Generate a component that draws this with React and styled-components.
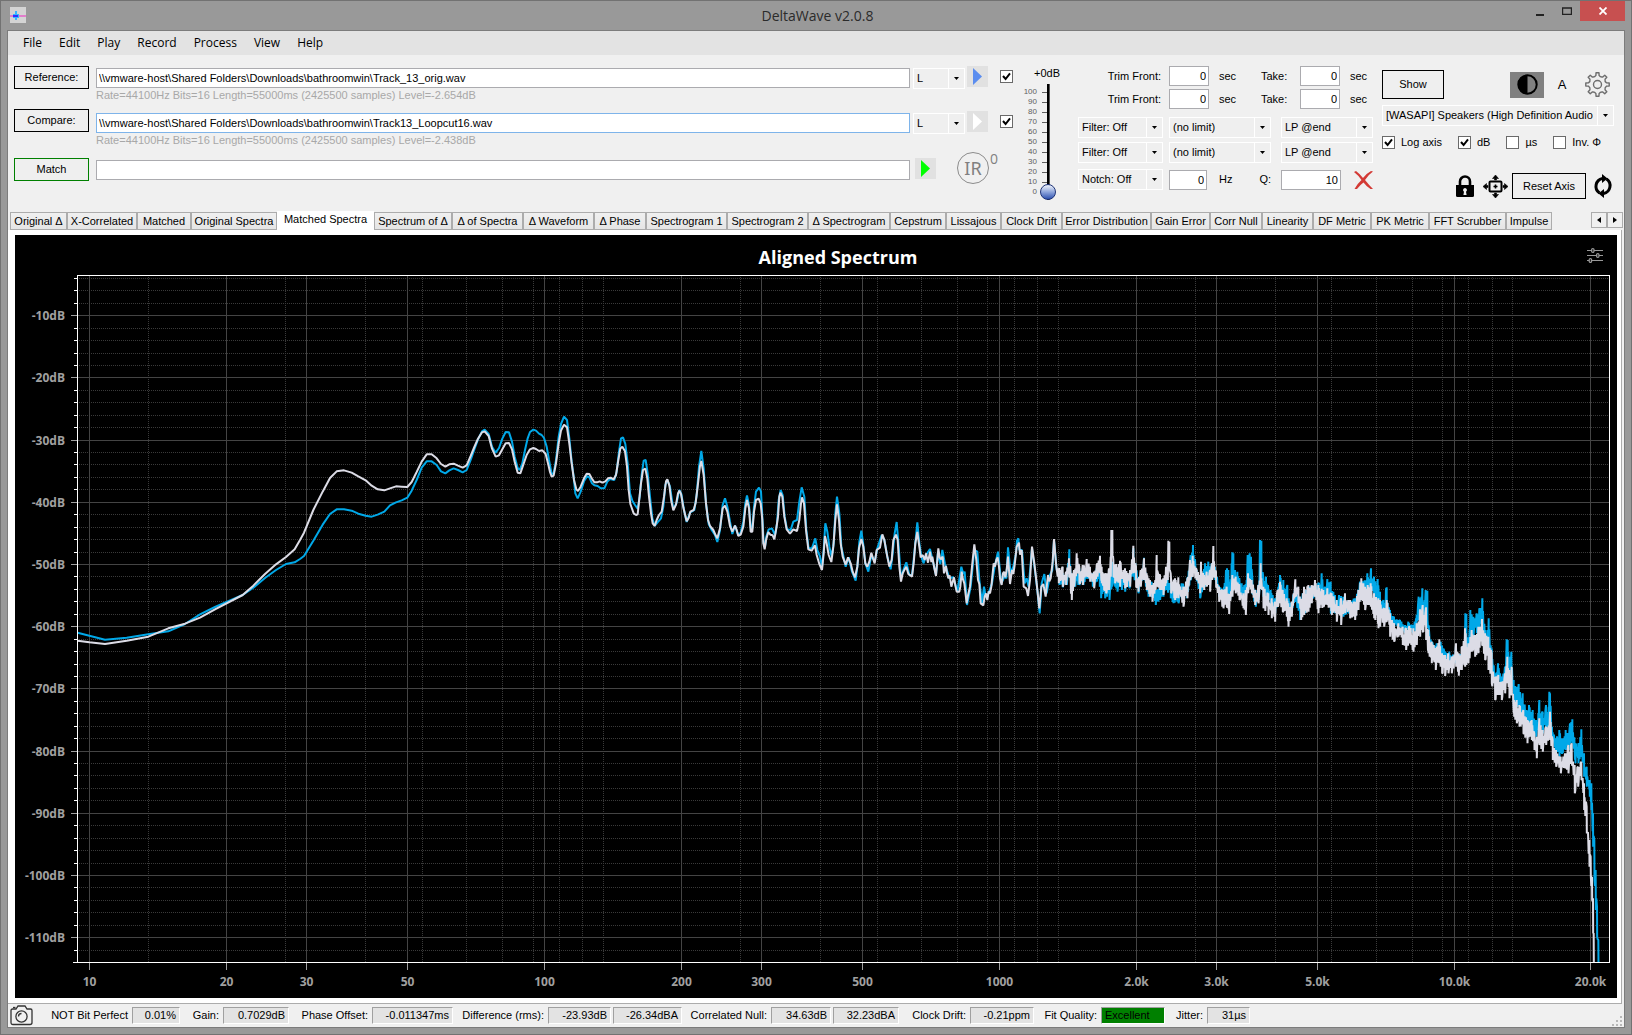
import { useLayoutEffect, useRef, useState } from 'react';
import styled, { createGlobalStyle } from 'styled-components';

const UI_FONT = '"Liberation Sans", Arial, sans-serif';
const SEGOE = '"Open Sans", "Noto Sans", sans-serif';

const GlobalStyle = createGlobalStyle`
  *, *::before, *::after { box-sizing: border-box; }
  html, body, #root { height: 100%; margin: 0; }
  body { background: #999; }
  button, input, select, output, label {
    font: 11px/13px ${UI_FONT};
    color: #000;
    margin: 0;
    padding: 0;
    border-radius: 0;
  }
`;

// --- WINDOW ---
const Window = styled.div`
  display: flex;
  flex-direction: column;
  height: 100%;
  border: 1px solid #727272;
  background: #999;
  font: 11px/13px ${UI_FONT};
  color: #000;
`;

const TitleBar = styled.header`
  display: grid;
  grid-template-columns: 1fr auto 1fr;
  height: 29px;
  flex: none;
  padding: 0 6px 0 9px;
`;

const AppIcon = styled.svg`
  width: 16px;
  height: 16px;
  margin-top: 6px;
`;

const WindowTitle = styled.h1`
  margin: 0;
  font: 14px/29px ${SEGOE};
  color: #2b2b2b;
`;

const WindowButtons = styled.div`
  display: flex;
  justify-content: flex-end;
  align-items: flex-start;
`;

const WindowButton = styled.button`
  display: flex;
  align-items: center;
  justify-content: center;
  width: ${({ $close }) => ($close ? 45 : 27)}px;
  height: 20px;
  border: 0;
  background: ${({ $close }) => ($close ? '#c75050' : 'transparent')};
`;

const Client = styled.div`
  flex: 1;
  min-height: 0;
  display: flex;
  flex-direction: column;
  margin: 0 6px 6px;
  border: 1px solid #7c7c7c;
  background: #f0f0f0;
`;

const MenuBar = styled.nav`
  display: flex;
  height: 24px;
  flex: none;
  padding-left: 7px;
  background: #e3e3e3;
`;

const MenuButton = styled.button`
  border: 0;
  background: none;
  padding: 0 9px 0 8px;
  font: 12px/24px ${SEGOE};
`;

// --- TOOLBAR ---
const Toolbar = styled.section`
  display: flex;
  height: 156px;
  flex: none;
  padding: 11px 10px 0 6px;
`;

const Button = styled.button`
  width: ${({ $w }) => $w}px;
  height: ${({ $h = 23 }) => $h}px;
  border: 1px solid ${({ $edge = '#000' }) => $edge};
  background: #efefef;
`;

const ButtonColumn = styled.div`
  display: grid;
  grid-template-rows: 43px 49px 23px;
  align-content: start;
  margin-right: 7px;
`;

const FieldColumn = styled.div`
  flex: 1;
  min-width: 200px;
  display: grid;
  grid-template-rows: 45px 47px 20px;
  align-content: start;
  padding-top: 2px;
`;

const FileField = styled.div`
  display: flex;
  flex-direction: column;
  gap: 1px;
`;

const TextBox = styled.input`
  width: ${({ $w }) => ($w ? `${$w}px` : '100%')};
  height: 20px;
  flex: none;
  padding: 0 2px;
  border: 1px solid ${({ $focus }) => ($focus ? '#7eb4ea' : '#ababaf')};
  background: #fff;
  text-align: ${({ $right }) => ($right ? 'right' : 'left')};
  outline: none;
`;

const FileInfo = styled.span`
  color: #a8a8a8;
`;

const DeckColumn = styled.div`
  display: grid;
  grid-template-rows: 45px 45px 36px;
  align-content: start;
  margin-left: 3px;
  width: 101px;
`;

const DeckRow = styled.div`
  display: flex;
  align-items: flex-start;
  gap: 2px;
`;

const SelectBox = styled.div`
  position: relative;
  display: flex;
  width: ${({ $w }) => ($w ? `${$w}px` : '100%')};
  height: 21px;
  flex: none;
  margin-top: ${({ $drop = 0 }) => $drop}px;
  border: 1px solid #fff;
  background: #efefef;
`;

const NativeSelect = styled.select`
  appearance: none;
  flex: 1;
  min-width: 0;
  height: 19px;
  padding: 0 17px 0 3px;
  border: 0;
  outline: none;
  white-space: nowrap;
  overflow: hidden;
  background: linear-gradient(#fff, #fff) right 15px top / 1px 100% no-repeat;
`;

const SelectArrow = styled.svg`
  position: absolute;
  right: 5px;
  top: 8px;
  width: 5px;
  height: 3px;
  pointer-events: none;
`;

const PlayButton = styled.button`
  display: flex;
  align-items: center;
  justify-content: center;
  width: 21px;
  height: 21px;
  flex: none;
  border: 0;
  background: #e1e1e1;
`;

const Check = styled.input`
  appearance: none;
  width: 13px;
  height: 13px;
  flex: none;
  border: 1px solid #6a6a6a;
  background: #fff;

  &:checked {
    background: #fff url("data:image/svg+xml,%3Csvg xmlns='http://www.w3.org/2000/svg' viewBox='0 0 11 11'%3E%3Cpath d='M2 5l2.6 3L9 2.4' fill='none' stroke='%23000' stroke-width='2'/%3E%3C/svg%3E") center / 11px 11px no-repeat;
  }
`;

const DeckCheck = styled(Check)`
  margin: 4px 0 0 10px;
`;

const MatchRow = styled.div`
  display: flex;
  align-items: center;
  padding: 0 0 12px 2px;
`;

const ImpulseButton = styled.button`
  display: flex;
  align-items: flex-start;
  gap: 1px;
  margin-left: 21px;
  border: 0;
  background: none;
  font: 14px/14px ${SEGOE};
  color: #808080;
`;

const ImpulseBadge = styled.span`
  display: flex;
  align-items: center;
  justify-content: center;
  width: 32px;
  height: 32px;
  border: 1px solid #8c8c8c;
  border-radius: 50%;
  font: 18px/28px "Noto Sans", sans-serif;
`;

const VolumeColumn = styled.div`
  display: grid;
  grid-template-columns: 25px 16px;
  grid-template-rows: 18px 116px;
  align-content: start;
  margin: 0 22px 0 1px;
`;

const VolumeLabel = styled.label`
  grid-column: 1 / -1;
  text-align: right;
  line-height: 15px;
  margin-right: -4px;
  white-space: nowrap;
`;

const Scale = styled.ul`
  margin: 3px 0 0;
  padding: 0;
  list-style: none;
  font: 8px/10px ${UI_FONT};
  color: #606060;
`;

const ScaleMark = styled.li`
  display: flex;
  align-items: center;
  justify-content: flex-end;
  gap: 5px;
  height: 10px;
  margin-right: -8px;

  &::after {
    content: '';
    width: 6px;
    height: 1px;
    background: #606060;
  }
`;

const VolumeSlider = styled.input`
  appearance: none;
  writing-mode: vertical-lr;
  direction: rtl;
  width: 16px;
  height: 116px;
  background: linear-gradient(90deg, #000 2px, #555 2px) center / 3px 100% no-repeat;

  &::-webkit-slider-thumb {
    appearance: none;
    width: 16px;
    height: 16px;
    border: 1px solid #1f3478;
    border-radius: 50%;
    background: linear-gradient(#dfe6f5 10%, #8ea5dc 50%, #2f52b0);
  }
`;

const FilterPanel = styled.div`
  width: 297px;
  flex: none;
  display: flex;
  flex-direction: column;
`;

const TrimRow = styled.div`
  display: grid;
  grid-template-columns: 81px 40px 32px 29px 40px 20px;
  column-gap: 10px;
  align-items: center;
  height: 20px;
  margin-bottom: 3px;
`;

const TrimLabel = styled.label`
  text-align: right;
  margin-right: -2px;
`;

const FilterRow = styled.div`
  display: grid;
  grid-template-columns: 85px 106px 92px;
  column-gap: 6px;
  align-items: center;
  margin-top: ${({ $gap = 4 }) => $gap}px;
`;

const NotchCell = styled.div`
  display: flex;
  align-items: center;
  gap: 12px;
`;

const QualityLabel = styled.label`
  margin: 0 4px 0 auto;
`;

const IconButton = styled.button`
  display: flex;
  align-items: center;
  justify-content: center;
  width: ${({ $w = 26 }) => $w}px;
  height: 26px;
  flex: none;
  border: 0;
  background: ${({ $bg = 'none' }) => $bg};
  font-size: ${({ $size = 11 }) => $size}px;
`;

const ClearButton = styled(IconButton)`
  height: 20px;
`;

const ViewPanel = styled.div`
  width: 232px;
  flex: none;
  margin-left: 7px;
  padding-top: 4px;
`;

const ViewRow = styled.div`
  display: flex;
  align-items: center;
  justify-content: space-between;
  margin-bottom: ${({ $gap = 0 }) => $gap}px;
`;

const IconGroup = styled.div`
  display: flex;
  align-items: center;
  gap: 5px;
`;

const CheckRow = styled.div`
  display: flex;
  gap: 16px;
  height: 13px;
  margin: 10px 0 24px;
`;

const CheckLabel = styled.label`
  display: flex;
  align-items: center;
  gap: 6px;
  white-space: nowrap;
`;

const AxisRow = styled.div`
  display: flex;
  align-items: center;
  justify-content: flex-end;
  margin-right: -6px;
`;

// --- TABS ---
const TabStrip = styled.div`
  display: flex;
  align-items: flex-end;
  height: 19px;
  flex: none;
  padding-left: 2px;
`;

const Tab = styled.button`
  width: ${({ $w }) => $w}px;
  height: ${({ $active }) => ($active ? 20 : 18)}px;
  flex: 0 1 auto;
  padding-bottom: ${({ $active }) => ($active ? 3 : 0)}px;
  margin-bottom: ${({ $active }) => ($active ? -1 : 0)}px;
  border: 1px solid ${({ $active }) => ($active ? '#fff' : '#acacac')};
  background: ${({ $active }) => ($active ? '#fff' : 'linear-gradient(#f0f0f0, #e5e5e5)')};
  white-space: nowrap;
  text-align: center;
`;

const TabScroll = styled.div`
  display: flex;
  align-self: flex-start;
  margin: 1px 1px 0 auto;
`;

const ScrollButton = styled.button`
  width: 16px;
  height: 16px;
  border: 1px solid #acacac;
  background: #f0f0f0;
  display: flex;
  align-items: center;
  justify-content: center;
`;

// --- CHART ---
const TabPage = styled.main`
  flex: 1;
  min-height: 0;
  display: flex;
  padding: 5px 4px 5px 7px;
  margin-right: 2px;
  border: solid #acacac;
  border-width: 0 1px 1px 0;
  background: #fff;
`;

const ChartPanel = styled.section`
  flex: 1;
  min-width: 0;
  display: flex;
  flex-direction: column;
  background: #000;
`;

const ChartHeader = styled.div`
  display: grid;
  grid-template-columns: 1fr auto 1fr;
  align-items: center;
  height: 40px;
  flex: none;
  padding: 4px 14px 0 58px;
`;

const ChartTitle = styled.h2`
  grid-column: 2;
  margin: 0;
  font: 700 18px/24px ${SEGOE};
  color: #fff;
`;

const ChartSettings = styled.button`
  justify-self: end;
  width: 16px;
  height: 16px;
  margin-bottom: 4px;
  border: 0;
  background: none;
`;

const ChartBody = styled.div`
  flex: 1;
  min-height: 0;

  svg { display: block; }
  text { font: 700 12px ${SEGOE}; fill: #a0a0a0; }
`;

// --- STATUS BAR ---
const StatusBar = styled.footer`
  display: flex;
  align-items: center;
  height: 23px;
  flex: none;
  padding: 0 1px 0 2px;
`;

const StatusGroup = styled.div`
  display: flex;
  align-items: center;
  gap: 2px;
  width: ${({ $w }) => $w}px;
  justify-content: flex-end;
`;

const StatusLabel = styled.label`
  margin-right: 2px;
  white-space: nowrap;
`;

const StatusValue = styled.output`
  width: ${({ $w }) => $w}px;
  height: 17px;
  flex: none;
  padding: 1px 3px 0;
  border: 1px solid;
  border-color: #a0a0a0 #fff #fff #a0a0a0;
  background: ${({ $good }) => ($good ? '#008000' : '#e3e3e3')};
  text-align: ${({ $good }) => ($good ? 'left' : 'right')};
`;

const SizeGrip = styled.svg`
  width: 12px;
  height: 12px;
  margin-left: auto;
  align-self: flex-end;
`;

// --- DATA ---
const menus = ['File', 'Edit', 'Play', 'Record', 'Process', 'View', 'Help'];

const tabs = [
  ['Original Δ', 57], ['X-Correlated', 70], ['Matched', 54], ['Original Spectra', 86],
  ['Matched Spectra', 97], ['Spectrum of Δ', 78], ['Δ of Spectra', 71], ['Δ Waveform', 71],
  ['Δ Phase', 52], ['Spectrogram 1', 81], ['Spectrogram 2', 81], ['Δ Spectrogram', 82],
  ['Cepstrum', 56], ['Lissajous', 55], ['Clock Drift', 61], ['Error Distribution', 89],
  ['Gain Error', 59], ['Corr Null', 52], ['Linearity', 51], ['DF Metric', 58],
  ['PK Metric', 58], ['FFT Scrubber', 77], ['Impulse', 46],
];

const statusItems = [
  { label: 'NOT Bit Perfect', width: 147, values: [['0.01%', 48]] },
  { label: 'Gain:', width: 109, values: [['0.7029dB', 66]] },
  { label: 'Phase Offset:', width: 164, values: [['-0.011347ms', 81]] },
  { label: 'Difference (rms):', width: 229, values: [['-23.93dB', 63], ['-26.34dBA', 69]] },
  { label: 'Correlated Null:', width: 217, values: [['34.63dB', 60], ['32.23dBA', 66]] },
  { label: 'Clock Drift:', width: 135, values: [['-0.21ppm', 64]] },
  { label: 'Fit Quality:', width: 131, values: [['Excellent', 64]], good: true },
  { label: 'Jitter:', width: 85, values: [['31µs', 43]] },
];

// Traces are stored on a 4599 x 2064 grid that covers the plot area.
const GRID_W = 4599;
const GRID_H = 2064;

// [x offset, y offset, "x,y x,y ..."]
const matchedLines = [
  [0, 0, '2,1097 37,1102 84,1107 149,1097 214,1085 274,1060 324,1046 369,1028 414,1003 497,960 529,932 564,897 597,868 627,846 653,823'],
  [669, 315, '0,480 12,458 40,390 68,335 90,294 110,274 132,271 155,278 175,289 197,301 215,317 233,328 253,331 270,325 288,319 305,320 322,321 335,306 350,276 365,245 380,223 395,223 410,235 423,252 436,260 448,253 461,251 474,257 488,263 500,256 512,228 523,201 534,176 546,157 554,154 566,168 576,206 587,230 597,226 607,208 617,190 627,189 636,208 644,245 653,278 661,280 670,254 680,225 690,208 700,204 708,207 717,213 727,211 737,222 744,250 750,276 755,290 761,287 768,250 776,190 783,152 792,134 801,142 808,190 815,250 822,300 829,328 834,333 842,320 852,295 860,281 868,282 876,296 883,307 891,307 899,304 907,308 916,304 924,295 932,293 941,298 948,285 955,240 961,206 967,200 975,214 981,260 986,330 991,372 1001,400 1008,405 1013,403 1017,365 1023,310 1029,270 1036,266 1042,296 1047,350 1053,400 1058,430 1064,438 1070,420 1077,405 1085,395 1092,350 1098,304 1102,298 1108,316 1114,364 1120,391 1128,374 1134,340 1138,332 1143,342 1150,382 1160,424 1166,414 1171,395 1181,390 1187,368 1193,320 1200,258 1204,243 1211,285 1218,370 1224,420 1230,438 1240,450 1247,466 1252,475'],
  [1869, 495, '60,265 68,205 75,197 82,215 90,258 97,275 105,257 110,270 115,288 122,284 130,260 136,205 141,180 147,205 152,275 157,275 162,215 168,180 176,176 182,190 187,240 190,310 194,328 198,300 205,276 211,284 218,286 223,298 229,265 234,230 238,170 241,158 247,170 253,230 260,268 270,281 280,268 291,273 298,240 303,190 306,172 312,190 318,270 325,328 335,332 345,316 350,345 358,372 366,390 371,340 375,288 380,310 386,345 394,366 400,320 406,240 411,193 417,240 422,310 428,350 437,374 444,352 452,370 458,395 465,412 472,380 477,325 484,297 490,320 496,370 502,380 508,365 514,338 519,355 524,370 530,330 540,323 547,283 553,300 560,340 568,380 575,360 580,300 588,284 593,300 598,380 603,425 608,400 613,390 619,380 625,402 636,410 641,370 646,310 652,276 658,320 662,352 668,345 674,360 678,340 684,368 690,335 694,366 697,350 703,385 708,408 715,325 719,352 722,358 728,350 732,400 738,378 741,400 745,415 749,406 754,440 762,412 766,436 770,455 778,455 781,440 785,395 789,418 793,430 800,490 804,466 810,440 817,370 823,313 829,360 834,420 838,432 842,490 850,496 854,470 858,460 862,480 866,455 870,460 874,440 881,370 885,380 889,360 893,352 897,380 900,415 905,435 909,400 912,395 916,412 920,390 924,350 930,432 936,390 940,402 944,375 950,320 957,308 960,344 965,330 971,440 979,445 984,468 990,420 996,320 1003,370 1010,430 1018,505 1024,440 1030,432 1037,470 1044,405 1048,424 1052,415 1058,365 1062,297 1068,370 1073,410'],
];

const compareLines = [
  [0, 0, '2,1073 37,1082 84,1094 149,1088 214,1078 274,1069 324,1047 369,1018 414,996 497,960 529,938 564,909 597,885 627,867 653,862'],
  [669, 315, '0,537 12,528 40,482 68,434 90,402 110,388 132,388 155,392 175,401 197,407 215,410 233,404 253,395 270,376 288,367 305,361 322,353 335,332 350,300 365,263 380,244 395,244 410,255 423,274 436,280 448,271 461,265 474,270 488,277 500,270 512,240 523,208 534,178 546,154 554,149 566,162 576,200 587,218 597,204 607,176 617,156 627,157 636,185 644,230 653,264 659,270 667,250 675,210 683,175 690,156 700,149 708,152 717,161 725,165 732,174 740,200 747,240 755,282 761,280 768,240 776,170 783,132 792,110 801,120 808,175 815,245 821,290 826,340 833,355 842,335 852,304 862,288 868,292 876,310 883,316 893,318 902,325 913,325 922,305 930,297 943,300 950,275 957,215 963,175 969,172 976,192 983,250 990,340 997,362 1005,375 1013,386 1019,350 1025,285 1031,242 1037,240 1043,280 1050,350 1057,415 1064,438 1072,428 1083,415 1090,380 1096,315 1102,300 1110,320 1120,388 1130,368 1138,330 1144,342 1152,390 1160,426 1170,398 1183,390 1190,345 1197,260 1204,213 1211,265 1218,370 1226,432 1235,450 1245,465 1252,486'],
  [1869, 495, '60,270 68,195 75,175 82,200 90,245 97,282 105,257 115,287 122,278 130,245 136,190 141,166 147,195 152,262 157,265 162,200 168,155 177,143 183,155 188,250 191,310 195,322 199,290 206,268 216,265 225,285 231,250 236,180 242,150 248,165 254,230 261,268 272,270 280,245 291,240 298,185 305,142 313,170 319,270 326,326 336,324 346,295 352,330 360,350 366,382 371,330 376,250 382,275 388,320 395,350 401,310 406,220 411,170 418,220 424,320 437,380 446,352 456,395 467,422 472,380 478,305 484,272 490,315 496,370 505,395 514,345 524,365 532,325 545,285 553,300 562,350 572,388 578,340 584,280 590,246 596,320 603,415 612,385 619,367 628,405 636,405 642,350 652,247 658,310 664,350 671,370 678,345 690,327 700,370 708,405 714,335 721,372 727,330 735,372 748,415 760,412 772,455 784,380 790,402 794,395 801,495 812,440 823,330 832,335 838,420 846,490 852,440 857,470 862,470 876,430 884,380 894,335 904,430 914,408 919,415 924,322 932,400 940,380 948,340 951,302 955,295 958,330 966,330 974,430 980,415 986,440 996,325 1006,400 1012,450 1019,520 1025,430 1033,402 1040,460 1050,405 1057,390 1062,300 1070,390'],
];

// [x offset, y offset, "x,top,bottom ..."] for the part where the bins get denser than the pixels
const matchedBands = [
  [3069, 645, '-124,235,280 -112,230,290 -102,245,285 -93,205,260 -85,250,330 -78,240,290 -70,190,250 -62,230,280 -52,225,285 -40,207,260 -30,230,275 -18,245,295 -8,220,260 0,197,250 5,230,280 12,250,300 18,250,310 27,235,300 32,200,260 34,120,200 37,120,200 40,210,260 45,225,280 60,212,290 75,235,295 90,240,290 100,167,250 108,230,290 115,265,305 122,240,290 132,205,270 140,250,300 150,270,320 157,285,335 166,270,300 170,195,290 174,250,290 180,255,300 190,265,315 198,230,280 203,220,270 205,152,230 208,155,240 213,265,310 225,265,330 235,262,325 250,290,350 262,265,325 270,210,270 278,197,260 290,240,270 300,255,310 303,215,290 312,255,300 320,245,290 330,240,305 336,220,270 340,168,250 348,245,290 357,290,335 370,300,355 380,290,350 387,320,372 397,255,320 407,260,310 418,285,330 430,310,355 437,300,375 444,250,310 455,270,310 465,300,345 475,285,340 482,220,290 490,290,355 505,310,375 515,325,385 525,335,395 533,300,350 540,275,340 548,300,365 560,325,380 565,340,410 575,335,380 586,268,320 595,290,340 603,330,390 612,290,375 625,285,365 635,285,340 645,270,320 655,285,370 670,300,350 682,295,345 695,310,375 710,330,395 723,325,405 735,310,370 750,330,385 765,335,390 775,300,360 784,265,330 795,290,360 803,285,345 812,280,350 822,310,385 835,325,415'],
  [3909, 735, '0,240,320 12,265,320 20,240,305 30,280,350 42,310,365 55,310,350 68,320,375 78,325,390 88,318,370 100,325,395 110,310,375 120,268,350 128,255,335 138,262,360 145,330,400 155,365,430 167,385,450 178,358,430 186,400,460 195,405,468 205,400,460 215,410,460 228,370,440 236,400,467 245,380,450 255,325,440 265,370,430 275,330,395 285,345,410 295,320,400 306,297,375 315,340,420 325,350,450 335,400,490 345,470,540 355,465,525 365,485,540 375,460,520 382,410,490 388,450,535 395,440,520 402,540,590 410,540,610 418,555,620 430,570,640 442,600,670 455,600,660 463,640,690 470,650,715 478,595,675 488,630,695 498,620,675 510,575,660 518,660,720 528,690,740 542,710,760 555,700,745 565,675,760 575,670,730 584,735,820 594,740,800 604,725,780 612,790,870 620,860,940 628,960,1040 632,1010,1070 636,1070,1140 639,1135,1240 641,1240,1329'],
];

const compareBands = [
  [3069, 645, '-122,250,285 -112,250,292 -100,250,285 -92,178,250 -84,255,295 -75,240,290 -62,235,285 -50,240,285 -38,230,265 -22,250,290 -10,235,275 -1,240,290 3,260,325 15,270,325 28,270,330 36,215,290 45,255,290 52,270,305 65,250,300 75,255,305 88,260,295 100,175,260 115,270,310 132,203,270 145,280,320 155,275,320 167,300,345 180,270,330 190,280,320 200,240,300 212,280,325 220,300,340 235,290,340 245,280,325 260,275,325 272,195,270 279,165,250 290,240,270 300,270,325 315,220,290 325,215,270 335,220,260 345,230,270 357,290,320 372,290,340 378,240,310 381,235,310 385,240,310 390,275,330 395,220,280 397,187,280 400,190,280 405,240,290 412,245,300 425,280,320 433,285,330 440,270,310 443,195,300 449,190,270 453,200,280 457,265,310 467,300,350 476,285,330 480,150,270 484,152,270 490,262,320 498,260,330 512,300,350 525,325,370 535,290,340 540,255,330 550,270,340 562,285,370 572,340,375 586,290,330 600,320,390 615,300,370 630,290,340 645,275,320 657,280,330 665,250,320 675,290,330 682,267,310 692,275,370 705,315,370 717,315,370 730,320,380 745,330,370 765,325,380 780,275,330 790,275,320 802,250,310 813,235,300 822,260,330 833,267,350'],
  [3909, 735, '0,215,290 10,240,290 18,205,290 20,202,290 23,250,290 30,270,310 42,290,320 60,300,320 75,315,340 85,305,330 98,315,340 108,295,340 116,230,300 124,230,300 127,205,290 134,240,300 137,210,300 142,212,300 148,345,380 158,370,400 170,370,410 182,365,420 192,390,420 208,395,430 220,405,430 228,375,430 236,405,440 248,380,430 254,370,400 256,280,380 259,282,380 264,360,400 269,330,370 271,270,350 280,290,350 290,280,340 298,265,330 307,235,310 316,330,400 323,330,390 326,295,390 335,385,440 344,460,490 354,430,480 366,470,500 375,440,480 380,358,440 383,360,440 388,410,470 394,395,450 401,480,560 410,500,560 416,492,560 428,520,590 438,570,610 447,555,620 458,570,630 468,600,650 475,580,630 478,540,620 488,575,640 498,555,630 506,560,620 508,515,610 510,520,610 516,620,670 527,655,700 538,630,710 548,655,700 557,630,690 566,640,690 570,610,670 577,598,670 586,670,730 595,670,730 604,628,710 612,700,770 620,740,800 629,780,830 634,790,870 639,880,980 643,960,1080 647,1050,1170 651,1160,1250 655,1260,1329'],
];

const readSections = (sections) =>
  sections.flatMap(([dx, dy, text]) =>
    text.split(' ').map((item) => {
      const [x, ...ys] = item.split(',').map(Number);
      return [x + dx, ...ys.map((y) => y + dy)];
    })
  );

// Walks the band from left to right, swinging between its upper and lower edge.
// The listed extremes are always reached, the steps between them fall short at random.
const fillBand = (band, seed) => {
  const points = [];
  let state = seed;
  const random = () => {
    state = (state * 16807) % 2147483647;
    return state / 2147483647;
  };
  let up = true;
  band.forEach(([x0, t0, b0], i) => {
    points.push([x0, t0], [x0 + 0.5, b0]);
    if (i === band.length - 1) return;
    const [x1, t1, b1] = band[i + 1];
    for (let x = x0 + 2; x < x1; x += 2) {
      const k = (x - x0) / (x1 - x0);
      const top = t0 + (t1 - t0) * k;
      const bottom = b0 + (b1 - b0) * k;
      const swing = random() * 0.4 * (bottom - top);
      points.push([x, Math.round(up ? top + swing : bottom - swing)]);
      up = !up;
    }
  });
  return points;
};

const toPoints = (lines, bands, seed) =>
  [...readSections(lines), ...fillBand(readSections(bands), seed)]
    .map((p) => p.join(','))
    .join(' ');

const series = [
  { id: 'compare', color: '#00a8e8', points: toPoints(compareLines, compareBands, 71) },
  { id: 'matched', color: '#dcdce6', points: toPoints(matchedLines, matchedBands, 19) },
];

const freqLabels = [
  [10, '10'], [20, '20'], [30, '30'], [50, '50'], [100, '100'], [200, '200'], [300, '300'],
  [500, '500'], [1000, '1000'], [2000, '2.0k'], [3000, '3.0k'], [5000, '5.0k'],
  [10000, '10.0k'], [20000, '20.0k'],
];

const minorFreqs = [0, 1, 2, 3].flatMap((d) =>
  [1, 2, 3, 4, 5, 6, 7, 8, 9].map((k) => 13.47 * k * 10 ** d)
).filter((f) => f < 21000);

const dbLabels = Array.from({ length: 11 }, (_, i) => -10 * (i + 1));
const minorDbs = Array.from({ length: 55 }, (_, i) => -4 - 2 * i).filter((v) => v % 10 !== 0);

const LOG_MIN = Math.log10(9.39);
const LOG_MAX = Math.log10(22080);
const DB_MAX = -3.54;
const DB_MIN = -114.15;

function useSize() {
  const ref = useRef(null);
  const [size, setSize] = useState({ width: 0, height: 0 });

  useLayoutEffect(() => {
    const update = () => {
      const { clientWidth, clientHeight } = ref.current;
      setSize({ width: clientWidth, height: clientHeight });
    };
    update();
    const observer = new ResizeObserver(update);
    observer.observe(ref.current);
    return () => observer.disconnect();
  }, []);

  return [ref, size];
}

function SpectrumChart() {
  const [ref, { width, height }] = useSize();
  const left = 62;
  const right = width - 7;
  const bottom = height - 35;
  const plotW = right - left;
  const plotH = bottom;

  const xOf = (f) => Math.round(left + ((Math.log10(f) - LOG_MIN) / (LOG_MAX - LOG_MIN)) * plotW) + 0.5;
  const yOf = (db) => Math.round(((DB_MAX - db) / (DB_MAX - DB_MIN)) * plotH) + 0.5;

  return (
    <ChartBody ref={ref}>
      {plotW > 0 && plotH > 0 && (
        <svg width={width} height={height} role="img" aria-label="Aligned Spectrum">
          <g stroke="#3a3a3a" strokeDasharray="1 1">
            {minorFreqs.map((f) => <path key={f} d={`M${xOf(f)} 0V${bottom}`} />)}
            {minorDbs.map((v) => <path key={v} d={`M${left} ${yOf(v)}H${right}`} />)}
          </g>
          <g stroke="#444">
            {freqLabels.map(([f]) => <path key={f} d={`M${xOf(f)} 0V${bottom}`} />)}
            {dbLabels.map((v) => <path key={v} d={`M${left} ${yOf(v)}H${right}`} />)}
          </g>
          <svg x={left} y="0" width={plotW} height={plotH} viewBox={`0 0 ${GRID_W} ${GRID_H}`} preserveAspectRatio="none">
            {series.map((s) => (
              <polyline
                key={s.id}
                points={s.points}
                fill="none"
                stroke={s.color}
                strokeWidth="2"
                strokeLinejoin="bevel"
                vectorEffect="non-scaling-stroke"
              />
            ))}
          </svg>
          <rect x={left + 0.5} y="0.5" width={plotW - 1} height={plotH - 1} fill="none" stroke="#fff" />
          <path d={`M${left - 4} ${bottom - 0.5}H${left}`} stroke="#fff" />
          <g stroke="#fff">
            {minorDbs.map((v) => <path key={v} d={`M${left - 3} ${yOf(v)}h3`} />)}
          </g>
          <g stroke="#a0a0a0">
            {dbLabels.map((v) => <path key={v} d={`M${left - 6} ${yOf(v)}h6`} />)}
            {freqLabels.map(([f]) => <path key={f} d={`M${xOf(f)} ${bottom}v7`} />)}
          </g>
          {dbLabels.map((v) => (
            <text key={v} x={left - 12} y={yOf(v) + 4} textAnchor="end">{v}dB</text>
          ))}
          {freqLabels.map(([f, label]) => (
            <text key={f} x={xOf(f)} y={bottom + 23} textAnchor="middle">{label}</text>
          ))}
        </svg>
      )}
    </ChartBody>
  );
}

// --- SMALL PARTS ---
function Select({ label, value, w, drop }) {
  return (
    <SelectBox $w={w} $drop={drop}>
      <NativeSelect aria-label={label} defaultValue={value}>
        <option>{value}</option>
      </NativeSelect>
      <SelectArrow viewBox="0 0 5 3"><path d="M0 0h5L2.500 3z" /></SelectArrow>
    </SelectBox>
  );
}

function Play({ label, color }) {
  return (
    <PlayButton aria-label={label}>
      <svg width="9" height="17" viewBox="0 0 9 17"><path d="M0 0l9 8.500L0 17z" fill={color} /></svg>
    </PlayButton>
  );
}

const GEAR_TEETH = 8;
const gearPath = Array.from({ length: GEAR_TEETH }, (_, i) => {
  const at = (offset, r) => {
    const a = ((i + offset) / GEAR_TEETH) * Math.PI * 2 - Math.PI / 2;
    return `${(12.5 + r * Math.cos(a)).toFixed(2)} ${(12.5 + r * Math.sin(a)).toFixed(2)}`;
  };
  return `${i ? 'L' : 'M'}${at(-0.16, 11.8)}L${at(0.16, 11.8)}L${at(0.22, 9.2)}Q${at(0.5, 7.6)} ${at(0.78, 9.2)}`;
}).join('') + 'Z';

function GearIcon() {
  return (
    <svg width="25" height="25" viewBox="0 0 25 25" fill="none" stroke="#6e6e6e" strokeWidth="1.4" strokeLinejoin="round">
      <path d={gearPath} />
      <circle cx="12.500" cy="12.500" r="4" />
    </svg>
  );
}

function ContrastIcon() {
  return (
    <svg width="21" height="21" viewBox="0 0 21 21">
      <circle cx="10.500" cy="10.500" r="9.200" fill="none" stroke="#000" strokeWidth="2" />
      <path d="M10.500 1a9.500 9.500 0 0 0 0 19z" />
    </svg>
  );
}

function LockIcon() {
  return (
    <svg width="18" height="23" viewBox="0 0 18 23">
      <path d="M4 11V6.500a5 5 0 0 1 10 0V11" fill="none" stroke="#000" strokeWidth="2.600" />
      <path d="M0 10h18v10.500a1.500 1.500 0 0 1-1.500 1.500h-15A1.500 1.500 0 0 1 0 20.500z" />
      <path d="M9 13a2 2 0 0 1 1 3.700l.6 3.300H7.400l.6-3.300A2 2 0 0 1 9 13z" fill="#f0f0f0" />
    </svg>
  );
}

function CenterIcon() {
  return (
    <svg width="25" height="23" viewBox="0 0 25 23">
      <rect x="6.500" y="6.500" width="12" height="10" rx="1" fill="none" stroke="#000" strokeWidth="2" />
      <path d="M12.500 0l3 3.500h-2v1.500h-2V3.500h-2zM12.500 23l3-3.500h-2V18h-2v1.500h-2zM0 11.500l3.500-3v2H5v2H3.500v2zM25 11.500l-3.500-3v2H20v2h1.500v2z" stroke="#000" strokeWidth="0.600" />
      <path d="M12.500 9.500v4M10.500 11.500h4" stroke="#000" strokeWidth="1.600" />
    </svg>
  );
}

function RefreshIcon() {
  return (
    <svg width="20" height="24" viewBox="0 0 20 24">
      <path d="M6.500 19A8 8 0 0 1 9.500 4.500M13.500 5A8 8 0 0 1 10.500 19.500" fill="none" stroke="#000" strokeWidth="3" />
      <path d="M9 0v9l5.500-4.500zM11 24v-9l-5.500 4.500z" />
    </svg>
  );
}

function CameraIcon() {
  return (
    <svg width="23" height="21" viewBox="0 0 23 21" fill="none" stroke="#333" strokeWidth="1.300">
      <path d="M1 5.500Q1 4 2.500 4H6l2-3h7l2 3h3.500Q22 4 22 5.500v12q0 2-2 2H3q-2 0-2-2z" />
      <circle cx="11.500" cy="11.500" r="5.600" />
      <path d="M8.500 11.500a3 3 0 0 1 3-3" />
      <path d="M3 2.500h2.500" />
    </svg>
  );
}

function TuneIcon() {
  return (
    <svg width="16" height="16" viewBox="0 0 16 16" fill="#222" stroke="#999" strokeWidth="1.200">
      <path d="M0 3.500h16M0 8.500h16M0 13.500h16" />
      <rect x="4.600" y="1.500" width="2.400" height="4" rx="1.200" />
      <rect x="9.600" y="6.500" width="2.400" height="4" rx="1.200" />
      <rect x="2.200" y="11.500" width="2.400" height="4" rx="1.200" />
    </svg>
  );
}

function TrimControls({ id }) {
  return (
    <TrimRow>
      <TrimLabel htmlFor={`${id}-front`}>Trim Front:</TrimLabel>
      <TextBox id={`${id}-front`} defaultValue="0" $w={40} $right />
      <span>sec</span>
      <label htmlFor={`${id}-take`}>Take:</label>
      <TextBox id={`${id}-take`} defaultValue="0" $w={40} $right />
      <span>sec</span>
    </TrimRow>
  );
}

function FileToolbar() {
  return (
    <>
      <ButtonColumn>
        <Button $w={75}>Reference:</Button>
        <Button $w={75}>Compare:</Button>
        <Button $w={75} $edge="#008000">Match</Button>
      </ButtonColumn>
      <FieldColumn>
        <FileField>
          <TextBox aria-label="Reference file" defaultValue="\\vmware-host\Shared Folders\Downloads\bathroomwin\Track_13_orig.wav" />
          <FileInfo>Rate=44100Hz Bits=16 Length=55000ms (2425500 samples) Level=-2.654dB</FileInfo>
        </FileField>
        <FileField>
          <TextBox aria-label="Compare file" $focus defaultValue="\\vmware-host\Shared Folders\Downloads\bathroomwin\Track13_Loopcut16.wav" />
          <FileInfo>Rate=44100Hz Bits=16 Length=55000ms (2425500 samples) Level=-2.438dB</FileInfo>
        </FileField>
        <TextBox aria-label="Match result" defaultValue="" />
      </FieldColumn>
      <DeckColumn>
        <DeckRow>
          <Select label="Reference channel" value="L" w={52} drop={2} />
          <Play label="Play reference" color="#5b8def" />
          <DeckCheck type="checkbox" aria-label="Use reference" defaultChecked />
        </DeckRow>
        <DeckRow>
          <Select label="Compare channel" value="L" w={52} drop={2} />
          <Play label="Play compare" color="#fff" />
          <DeckCheck type="checkbox" aria-label="Use compare" defaultChecked />
        </DeckRow>
        <MatchRow>
          <Play label="Play match" color="#00ff00" />
          <ImpulseButton>
            <ImpulseBadge>IR</ImpulseBadge>
            <span>0</span>
          </ImpulseButton>
        </MatchRow>
      </DeckColumn>
    </>
  );
}

function Volume() {
  return (
    <VolumeColumn>
      <VolumeLabel htmlFor="volume">+0dB</VolumeLabel>
      <Scale>
        {[100, 90, 80, 70, 60, 50, 40, 30, 20, 10, 0].map((v) => <ScaleMark key={v}>{v}</ScaleMark>)}
      </Scale>
      <VolumeSlider id="volume" type="range" min="0" max="100" defaultValue="0" />
    </VolumeColumn>
  );
}

function Filters() {
  return (
    <FilterPanel>
      <TrimControls id="trim-a" />
      <TrimControls id="trim-b" />
      {[5, 4].map((gap, i) => (
        <FilterRow key={gap} $gap={gap}>
          <Select label={`Filter ${i + 1}`} value="Filter: Off" w={85} />
          <Select label={`Filter ${i + 1} limit`} value="(no limit)" w={102} />
          <Select label={`Filter ${i + 1} type`} value="LP @end" w={92} />
        </FilterRow>
      ))}
      <FilterRow $gap={6}>
        <Select label="Notch" value="Notch: Off" w={85} />
        <NotchCell>
          <TextBox id="notch" aria-label="Notch frequency" defaultValue="0" $w={38} $right />
          <label htmlFor="notch">Hz</label>
          <QualityLabel htmlFor="notch-q">Q:</QualityLabel>
        </NotchCell>
        <NotchCell>
          <TextBox id="notch-q" defaultValue="10" $w={60} $right />
          <ClearButton $w={20} aria-label="Clear filters">
            <svg width="19" height="18" viewBox="0 0 19 18">
              <path d="M0 1l2-1q4 3 7 7 4-5 8-7l2 .5Q14 4 11 9q4 5 8 9h-2.500Q12 15 9.500 11.500 6 14 3 18H.5Q3 13 7.500 9 4 4 0 1z" fill="#d33a35" />
            </svg>
          </ClearButton>
        </NotchCell>
      </FilterRow>
    </FilterPanel>
  );
}

function ViewControls() {
  return (
    <ViewPanel>
      <ViewRow $gap={6}>
        <Button $w={62} $h={29}>Show</Button>
        <IconGroup>
          <IconButton $w={34} $bg="#808080" aria-label="Contrast"><ContrastIcon /></IconButton>
          <IconButton $size={13} aria-label="Font size">A</IconButton>
          <IconButton $w={34} aria-label="Settings"><GearIcon /></IconButton>
        </IconGroup>
      </ViewRow>
      <Select label="Output device" value="[WASAPI] Speakers (High Definition Audio Device)" />
      <CheckRow>
        <CheckLabel><Check type="checkbox" defaultChecked />Log axis</CheckLabel>
        <CheckLabel><Check type="checkbox" defaultChecked />dB</CheckLabel>
        <CheckLabel><Check type="checkbox" />µs</CheckLabel>
        <CheckLabel><Check type="checkbox" />Inv. Φ</CheckLabel>
      </CheckRow>
      <AxisRow>
        <IconButton aria-label="Lock axis"><LockIcon /></IconButton>
        <IconButton $w={34} aria-label="Center"><CenterIcon /></IconButton>
        <Button $w={74} $h={26}>Reset Axis</Button>
        <IconButton $w={34} aria-label="Refresh"><RefreshIcon /></IconButton>
      </AxisRow>
    </ViewPanel>
  );
}

export default function App() {
  const [activeTab, setActiveTab] = useState('Matched Spectra');

  return (
    <>
      <GlobalStyle />
      <Window>
        <TitleBar>
          <AppIcon viewBox="0 0 16 16">
            <rect width="16" height="16" fill="#d4d4d4" />
            <path d="M0 9h16" stroke="#e858c8" strokeWidth="1.400" />
            <path d="M5 4h2v9H5zM3 7h6v4H3z" fill="#35b8ff" />
            <path d="M3 9h5" stroke="#3030ff" strokeWidth="2" />
          </AppIcon>
          <WindowTitle>DeltaWave v2.0.8</WindowTitle>
          <WindowButtons>
            <WindowButton aria-label="Minimize">
              <svg width="8" height="9"><path d="M0 8h8" stroke="#222" strokeWidth="2" /></svg>
            </WindowButton>
            <WindowButton aria-label="Maximize">
              <svg width="10" height="8"><path d="M.5 1v6.500h9V1M0 1h10" fill="none" stroke="#222" strokeWidth="1.400" /></svg>
            </WindowButton>
            <WindowButton $close aria-label="Close">
              <svg width="8" height="8"><path d="M.5.5l7 7M7.500.5l-7 7" stroke="#fff" strokeWidth="1.800" /></svg>
            </WindowButton>
          </WindowButtons>
        </TitleBar>

        <Client>
          <MenuBar>
            {menus.map((name) => <MenuButton key={name}>{name}</MenuButton>)}
          </MenuBar>

          <Toolbar>
            <FileToolbar />
            <Volume />
            <Filters />
            <ViewControls />
          </Toolbar>

          <TabStrip role="tablist">
            {tabs.map(([name, width]) => (
              <Tab
                key={name}
                role="tab"
                aria-selected={name === activeTab}
                $active={name === activeTab}
                $w={width}
                onClick={() => setActiveTab(name)}
              >
                {name}
              </Tab>
            ))}
            <TabScroll>
              <ScrollButton aria-label="Scroll tabs left">
                <svg width="4" height="6"><path d="M4 0v6L0 3z" /></svg>
              </ScrollButton>
              <ScrollButton aria-label="Scroll tabs right">
                <svg width="4" height="6"><path d="M0 0v6l4-3z" /></svg>
              </ScrollButton>
            </TabScroll>
          </TabStrip>

          <TabPage>
            <ChartPanel>
              <ChartHeader>
                <ChartTitle>Aligned Spectrum</ChartTitle>
                <ChartSettings aria-label="Chart settings"><TuneIcon /></ChartSettings>
              </ChartHeader>
              <SpectrumChart />
            </ChartPanel>
          </TabPage>

          <StatusBar>
            <CameraIcon />
            {statusItems.map((item) => (
              <StatusGroup key={item.label} $w={item.width}>
                <StatusLabel>{item.label}</StatusLabel>
                {item.values.map(([text, width]) => (
                  <StatusValue key={text} $w={width} $good={item.good}>{text}</StatusValue>
                ))}
              </StatusGroup>
            ))}
            <SizeGrip viewBox="0 0 12 12">
              <path d="M9 1h2v2H9zM9 5h2v2H9zM5 5h2v2H5zM9 9h2v2H9zM5 9h2v2H5zM1 9h2v2H1z" fill="#b8b8b8" />
            </SizeGrip>
          </StatusBar>
        </Client>
      </Window>
    </>
  );
}
